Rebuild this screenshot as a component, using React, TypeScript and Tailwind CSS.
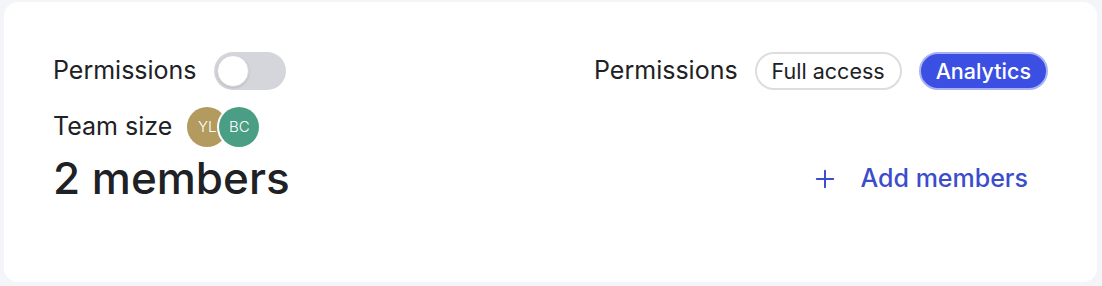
import { Plus } from "lucide-react";

function Toggle() {
  return (
    <div className="flex h-[38px] w-[72px] items-center rounded-full bg-[#d4d6db] px-[3px]">
      <div className="h-[32px] w-[32px] rounded-full border border-[#d4d6db] bg-white shadow-sm" />
    </div>
  );
}

function Avatar({ initials, color, className }: { initials: string; color: string; className?: string }) {
  return (
    <div
      className={`flex h-[40px] w-[40px] items-center justify-center rounded-full text-[15px] font-light text-white ${color} ${className ?? ""}`}
    >
      {initials}
    </div>
  );
}

export default function App() {
  return (
    <div className="h-[286px] w-[1102px] bg-[#f4f5f8] p-[2px] pl-[4px] pr-[5px] pb-[4px] font-['Inter',sans-serif] text-[#202124]">
      <div className="flex h-full justify-between rounded-[14px] bg-white px-[49px] pt-[50px]">
        <div className="flex flex-col">
          <div className="flex items-center gap-[17px]">
            <span className="text-[25px]">Permissions</span>
            <Toggle />
          </div>
          <div className="mt-[17px] flex items-center gap-[15px]">
            <span className="text-[25px]">Team size</span>
            <div className="flex">
              <Avatar initials="YL" color="bg-[#b39a5e]" />
              <Avatar initials="BC" color="bg-[#4a9e83]" className="-ml-[8px] ring-2 ring-white" />
            </div>
          </div>
          <div className="mt-[5px] text-[44px] font-medium leading-[52px]">2 members</div>
        </div>
        <div className="flex flex-col items-end">
          <div className="flex items-center gap-[17px]">
            <span className="text-[25px]">Permissions</span>
            <div className="flex h-[38px] items-center rounded-full border-2 border-[#dcdde0] px-[15px] text-[21.5px]">
              Full access
            </div>
            <div className="flex h-[38px] items-center rounded-full border-2 border-[#a9b2f2] bg-[#3b4fe3] px-[15px] text-[21.5px] font-medium text-white">
              Analytics
            </div>
          </div>
          <button className="mt-[70px] mr-[20px] flex items-center gap-[22px] text-[25px] font-medium text-[#3b4dcc]">
            <Plus className="h-[28px] w-[28px]" strokeWidth={1.7} />
            Add members
          </button>
        </div>
      </div>
    </div>
  );
}
